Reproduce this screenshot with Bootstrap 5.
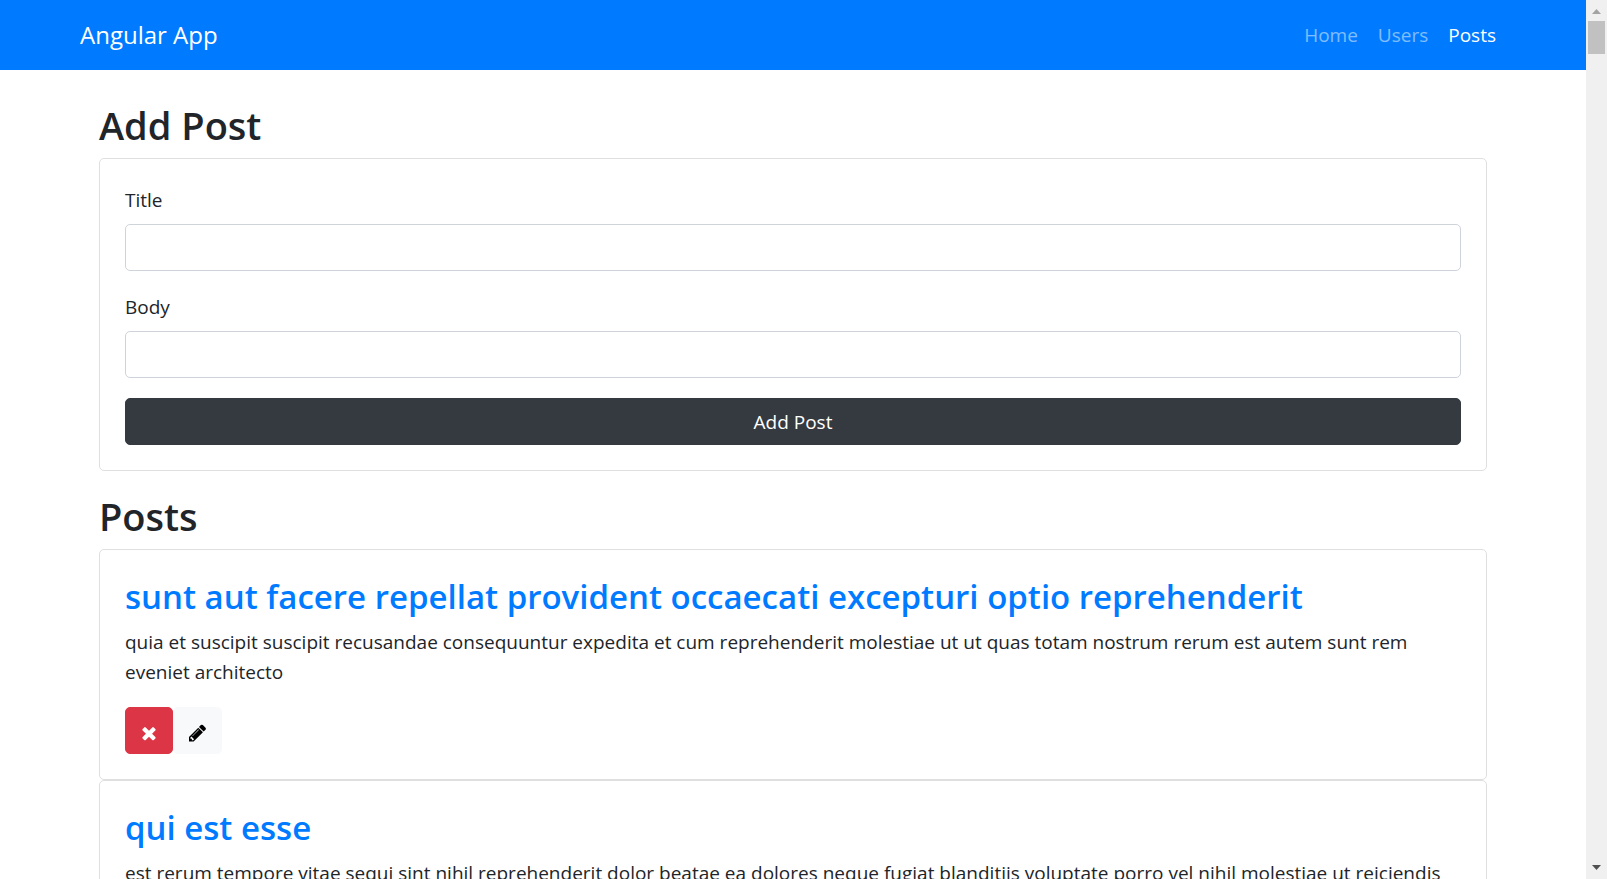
<!DOCTYPE html>
<html lang="en">
<head>
<meta charset="utf-8">
<meta name="viewport" content="width=device-width, initial-scale=1">
<title>Angular App</title>
<link rel="stylesheet" href="https://cdn.jsdelivr.net/npm/bootstrap@5.3.0/dist/css/bootstrap.min.css">
<style>
  html { font-size: 20px; }
  body {
    font-family: "Open Sans", "Noto Sans", sans-serif;
    font-size: 19px;
    line-height: 30px;
    color: #212529;
  }
  .container { max-width: 1426px; --bs-gutter-x: 38px; }
  .page-view { scrollbar-width: none; min-width: 0; }
  .app-bar { background: #007bff; padding: 10px 0; height: 70px; }
  .app-bar .container { padding: 0; }
  .app-bar .navbar-brand { font-size: 24px; line-height: 38px; padding: 6px 0; margin: 0; color: #fff; }
  .app-bar .nav-link { font-size: 19px; padding: 10px; color: rgba(255,255,255,.5); }
  .app-bar .nav-link.active { color: #fff; }
  h1 { font-size: 38px; line-height: 50px; font-weight: 600; margin-bottom: 8px; }
  h2 { font-size: 33px; line-height: 44px; font-weight: 600; margin-bottom: 8px; color: #007bff; }
  .card { border-color: #dfdfdf; border-radius: 5px; }
  .card-body { padding: 25px; }
  .field-group { margin-bottom: 20px; }
  .form-label { display: block; line-height: 32px; margin-bottom: 8px; }
  .form-control, .btn { font-size: 19px; line-height: 30px; height: 47px; border-radius: 5px; }
  .form-control { border-color: #ced4da; }
  .btn { padding: 8px 15px; }
  .btn svg { display: block; height: 20px; margin-top: 4px; fill: currentColor; }
  .btn-dark { background: #343a40; border-color: #343a40; }
  .btn-danger { background: #dc3545; border-color: #dc3545; }
  .btn-light { background: #f8f9fa; border-color: #f8f9fa; color: #000; }
  .scroll-track { width: 21px; background: #f0f0f0; }
  .scroll-track svg { display: block; width: 21px; height: 21px; }
  .scroll-thumb { height: 33px; margin: 0 2px; background: #c1c1c1; }
</style>
</head>
<body>
<div class="d-flex vh-100 overflow-hidden">
  <div class="page-view flex-grow-1 overflow-auto">
    <nav class="navbar navbar-expand app-bar mb-4">
      <div class="container">
        <a class="navbar-brand" href="#">Angular App</a>
        <ul class="navbar-nav ms-auto">
          <li class="nav-item"><a class="nav-link" href="#">Home</a></li>
          <li class="nav-item"><a class="nav-link" href="#">Users</a></li>
          <li class="nav-item"><a class="nav-link active" aria-current="page" href="#">Posts</a></li>
        </ul>
      </div>
    </nav>

    <main class="container">
      <h1>Add Post</h1>
      <div class="card mb-3">
        <form class="card-body">
          <div class="field-group">
            <label class="form-label" for="post-title">Title</label>
            <input class="form-control" type="text" id="post-title">
          </div>
          <div class="field-group">
            <label class="form-label" for="post-body">Body</label>
            <input class="form-control" type="text" id="post-body">
          </div>
          <button type="button" class="btn btn-dark d-block w-100">Add Post</button>
        </form>
      </div>

      <h1>Posts</h1>
      <article class="card">
        <div class="card-body">
          <h2>sunt aut facere repellat provident occaecati excepturi optio reprehenderit</h2>
          <p class="mb-3">quia et suscipit suscipit recusandae consequuntur expedita et cum reprehenderit molestiae ut ut quas totam nostrum rerum est autem sunt rem eveniet architecto</p>
          <div class="d-flex">
            <button type="button" class="btn btn-danger" aria-label="Delete">
              <svg width="16" viewBox="180 0 1432 1792"><path d="M1490 1322q0 40-28 68l-136 136q-28 28-68 28t-68-28l-294-294-294 294q-28 28-68 28t-68-28l-136-136q-28-28-28-68t28-68l294-294-294-294q-28-28-28-68t28-68l136-136q28-28 68-28t68 28l294 294 294-294q28-28 68-28t68 28l136 136q28 28 28 68t-28 68l-294 294 294 294q28 28 28 68z"/></svg>
            </button>
            <button type="button" class="btn btn-light" aria-label="Edit">
              <svg width="17" viewBox="128 0 1523 1792"><path d="M491 1536l91-91-235-235-91 91v107h128v128h107zm523-928q0-22-22-22-10 0-17 7l-542 542q-7 7-7 17 0 22 22 22 10 0 17-7l542-542q7-7 7-17zm-54-192l416 416-832 832h-416v-416zm683 96q0 53-37 90l-166 166-416-416 166-165q36-38 90-38 53 0 91 38l235 234q37 39 37 91z"/></svg>
            </button>
          </div>
        </div>
      </article>
      <article class="card">
        <div class="card-body">
          <h2>qui est esse</h2>
          <p class="mb-3">est rerum tempore vitae sequi sint nihil reprehenderit dolor beatae ea dolores neque fugiat blanditiis voluptate porro vel nihil molestiae ut reiciendis qui aperiam non debitis possimus qui neque nisi nulla</p>
        </div>
      </article>
    </main>
  </div>

  <div class="scroll-track d-flex flex-column flex-shrink-0" aria-hidden="true">
    <svg viewBox="0 0 21 21"><path d="M6 14h9l-4.500-5z" fill="#a3a3a3"/></svg>
    <div class="scroll-thumb"></div>
    <svg class="mt-auto" viewBox="0 0 21 21"><path d="M6 7h9l-4.500 5z" fill="#505050"/></svg>
  </div>
</div>
<script src="https://cdn.jsdelivr.net/npm/bootstrap@5.3.0/dist/js/bootstrap.bundle.min.js"></script>
</body>
</html>
